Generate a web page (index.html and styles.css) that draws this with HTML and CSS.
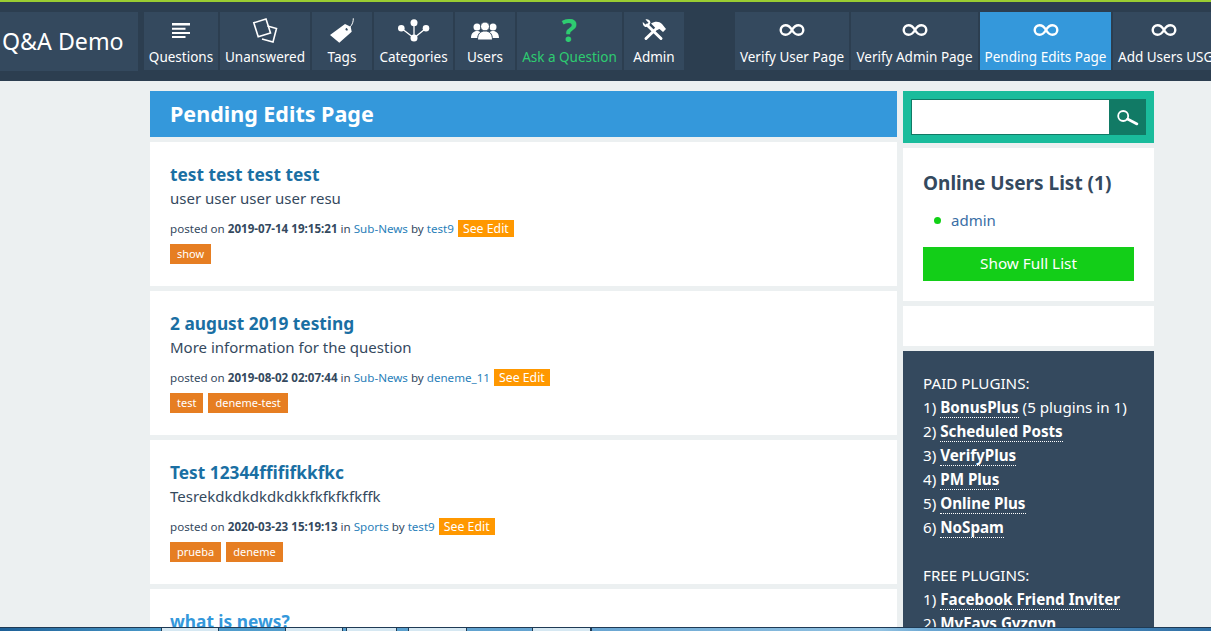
FILE: index.html
```html
<!DOCTYPE html>
<html lang="en">

<head>
    <meta name="viewport" content="width=device-width, initial-scale=1.0">
    <link rel="stylesheet" href="styles.css">
    <title>Pending Edits Page - Q&amp;A Demo</title>
</head>

<body>
    <header class="topbar">
        <a class="logo" href="#">Q&amp;A Demo</a>
        <nav class="nav nav-main">
            <a class="nav-item w-questions" href="#">
                <svg class="icon" viewBox="0 0 24 24"><path d="M3 5h18v2.500H3zM3 9.700h13.500v2H3zM3 14h18v2H3zM3 18h13.500v2H3z" fill="#fff"/></svg>
                Questions
            </a>
            <a class="nav-item w-unanswered" href="#">
                <svg class="icon" viewBox="0 0 24 24"><g fill="none" stroke="#fff" stroke-width="1.600"><path d="M14.500 8l9 2.500L20 24 9 21"/><path d="M.8 4.800L13 1l4.500 14L5.200 18.800z"/></g></svg>
                Unanswered
            </a>
            <a class="nav-item w-tags" href="#">
                <svg class="icon" viewBox="0 0 24 24"><path d="M0 17L15 6l5.700 2.700 1 5L9.300 24.700zM16.700 10a1.300 1.300 0 1 0 .1 0z" fill="#fff" fill-rule="evenodd"/><path d="M17 11c3-1 6.500-5 6.300-10.700" fill="none" stroke="#fff"/></svg>
                Tags
            </a>
            <a class="nav-item w-categories" href="#">
                <svg class="icon icon-wide" viewBox="0 0 32 24"><g fill="#fff"><path d="M16 5v15M16 20L3.300 10.300M16 20l12-9.700" fill="none" stroke="#fff" stroke-width="1.300"/><circle cx="16" cy="4.700" r="3.500"/><circle cx="3.300" cy="10.300" r="3.300"/><circle cx="28" cy="10.300" r="3.300"/><circle cx="16" cy="20" r="3.500"/></g></svg>
                Categories
            </a>
            <a class="nav-item w-users" href="#">
                <svg class="icon icon-wide" viewBox="0 0 32 24"><g fill="#fff"><circle cx="8" cy="9" r="3.500"/><circle cx="24" cy="9" r="3.500"/><path d="M2 20c0-5 3-7 6-7s6 2 6 7zM18 20c0-5 3-7 6-7s6 2 6 7z"/><circle cx="16" cy="8.500" r="4.500" stroke="#34495e"/><path d="M8.500 22c0-7 3.500-9 7.500-9s7.500 2 7.500 9z" stroke="#34495e"/></g></svg>
                Users
            </a>
            <a class="nav-item nav-ask w-ask" href="#">
                <span class="ask-mark">?</span>
                Ask a Question
            </a>
            <a class="nav-item w-admin" href="#">
                <svg class="icon" viewBox="0 0 24 24"><g fill="#fff"><path d="M5 7l14 13.500" fill="none" stroke="#fff" stroke-width="3" stroke-linecap="round"/><path d="M15 10L4 20.500" fill="none" stroke="#fff" stroke-width="3" stroke-linecap="round"/><path d="M.8 4l3.200 3 2.500-2.200L3.500 1.500C5.500.8 8 2 8.500 4.500L7 8 4 9C2 9 .5 6.500.8 4z"/><path d="M9 5.500C13 3 17 3 20 6l4 5-3 3-3.500-3-2.500 1-2.500-3z"/></g></svg>
                Admin
            </a>
        </nav>
        <nav class="nav nav-pages">
            <a class="nav-item w-verify-user" href="#">
                <svg class="icon-inf" viewBox="0 0 26 12"><use href="#inf"/></svg>
                Verify User Page
            </a>
            <a class="nav-item w-verify-admin" href="#">
                <svg class="icon-inf" viewBox="0 0 26 12"><use href="#inf"/></svg>
                Verify Admin Page
            </a>
            <a class="nav-item nav-active w-pending" href="#">
                <svg class="icon-inf" viewBox="0 0 26 12"><use href="#inf"/></svg>
                Pending Edits Page
            </a>
            <a class="nav-item w-add-users" href="#">
                <svg class="icon-inf" viewBox="0 0 26 12"><use href="#inf"/></svg>
                Add Users USG
            </a>
        </nav>
    </header>

    <svg class="defs" width="0" height="0"><defs><path id="inf" d="M13 6C11 2.500 9 1.200 6.500 1.200a4.800 4.800 0 0 0 0 9.600C9 10.800 11 9.500 13 6c2-3.500 4-4.800 6.500-4.800a4.800 4.800 0 0 1 0 9.600C17 10.800 15 9.500 13 6z" fill="none" stroke="#fff" stroke-width="2.400"/></defs></svg>

    <div class="wrap">
        <main class="main">
            <h1 class="page-title">Pending Edits Page</h1>

            <div class="question">
                <h2><a href="#">test test test test</a></h2>
                <p class="excerpt">user user user user resu</p>
                <p class="meta">posted on <b>2019-07-14 19:15:21</b> in <a href="#">Sub-News</a> by <a href="#">test9</a> <a class="see-edit" href="#">See Edit</a></p>
                <div class="tags"><a class="tag" href="#">show</a></div>
            </div>

            <div class="question">
                <h2><a href="#">2 august 2019 testing</a></h2>
                <p class="excerpt">More information for the question</p>
                <p class="meta">posted on <b>2019-08-02 02:07:44</b> in <a href="#">Sub-News</a> by <a href="#">deneme_11</a> <a class="see-edit" href="#">See Edit</a></p>
                <div class="tags"><a class="tag" href="#">test</a><a class="tag" href="#">deneme-test</a></div>
            </div>

            <div class="question">
                <h2><a href="#">Test 12344ffififkkfkc</a></h2>
                <p class="excerpt">Tesrekdkdkdkdkdkkfkfkfkfkffk</p>
                <p class="meta">posted on <b>2020-03-23 15:19:13</b> in <a href="#">Sports</a> by <a href="#">test9</a> <a class="see-edit" href="#">See Edit</a></p>
                <div class="tags"><a class="tag" href="#">prueba</a><a class="tag" href="#">deneme</a></div>
            </div>

            <div class="question">
                <h2><a class="title-new" href="#">what is news?</a></h2>
            </div>
        </main>

        <aside class="side">
            <form class="search">
                <input type="text" class="search-field">
                <button type="button" class="search-btn" aria-label="Search">
                    <svg viewBox="0 0 22 20" width="22" height="20"><circle cx="6.200" cy="9" r="5" fill="none" stroke="#fff" stroke-width="1.800"/><path d="M10.500 12l9.500 5" stroke="#fff" stroke-width="2.600" stroke-linecap="round"/></svg>
                </button>
            </form>

            <div class="box online">
                <h2>Online Users List (1)</h2>
                <ul>
                    <li><a href="#">admin</a></li>
                </ul>
                <a class="show-all" href="#">Show Full List</a>
            </div>

            <div class="box blank"></div>

            <div class="box plugins">
                <p>PAID PLUGINS:</p>
                <p>1) <a href="#">BonusPlus</a> (5 plugins in 1)</p>
                <p>2) <a href="#">Scheduled Posts</a></p>
                <p>3) <a href="#">VerifyPlus</a></p>
                <p>4) <a href="#">PM Plus</a></p>
                <p>5) <a href="#">Online Plus</a></p>
                <p>6) <a href="#">NoSpam</a></p>
                <p>&nbsp;</p>
                <p>FREE PLUGINS:</p>
                <p>1) <a href="#">Facebook Friend Inviter</a></p>
                <p>2) <a href="#">MyFavs Gyzgyn</a></p>
            </div>
        </aside>
    </div>

    <div class="taskbar">
        <span class="tb tb-1"></span><span class="tb tb-2"></span><span class="tb tb-3"></span><span class="tb tb-4"></span><span class="tb tb-5"></span><span class="tb tb-6"></span>
    </div>
</body>

</html>
```
FILE: styles.css
```css
* {
    box-sizing: border-box;
}

html,
body {
    height: 100%;
}

body {
    margin: 0;
    padding: 0;
    overflow: hidden;
    position: relative;
    font-family: "Noto Sans", sans-serif;
    font-size: 14px;
    color: #34495e;
    background-color: #ecf0f1;
}

a {
    color: #2980b9;
    text-decoration: none;
}

p {
    margin: 0;
}

.defs {
    display: block;
    height: 0;
}

/* top bar */
.topbar {
    display: flex;
    height: 81px;
    padding-top: 10px;
    background-color: #2c3e50;
    border-top: 2px solid #9acd32;
    overflow: hidden;
    white-space: nowrap;
}

.logo {
    flex: none;
    width: 138px;
    height: 59px;
    line-height: 58px;
    padding-left: 2px;
    font-size: 23.200px;
    color: #fff;
    background-color: #34495e;
}

.nav {
    display: flex;
    flex: none;
    gap: 2px;
    height: 58px;
}

.nav-main {
    margin-left: 6px;
}

.nav-pages {
    margin-left: 51px;
}

.nav-item {
    display: flex;
    flex: none;
    flex-direction: column;
    align-items: center;
    height: 58px;
    padding-top: 6px;
    font-size: 13.500px;
    line-height: 20px;
    color: #fff;
    background-color: #34495e;
}

.nav-ask {
    color: #2ecc71;
}

.nav-active {
    background-color: #3498db;
}

.icon {
    display: block;
    width: 24px;
    height: 24px;
    margin-bottom: 5px;
    overflow: visible;
}

.icon-wide {
    width: 32px;
}

.icon-inf {
    display: block;
    width: 26px;
    height: 12px;
    margin: 6px 0 11px;
}

.ask-mark {
    height: 24px;
    margin-bottom: 5px;
    font-size: 32px;
    line-height: 24px;
    font-weight: 700;
}

.w-questions { width: 74px; }
.w-unanswered { width: 90px; }
.w-tags { width: 60px; }
.w-categories { width: 79px; }
.w-users { width: 60px; }
.w-ask { width: 105px; }
.w-admin { width: 60px; }
.w-verify-user { width: 114px; }
.w-verify-admin { width: 127px; }
.w-pending { width: 131px; }
.w-add-users { width: 110px; align-items: flex-start; padding-left: 5px; }
.w-add-users .icon-inf { margin-left: 33px; }

/* page */
.wrap {
    display: flex;
    gap: 6px;
    padding: 10px 0 0 150px;
}

.main {
    flex: none;
    width: 747px;
}

.page-title {
    margin: 0 0 5px;
    height: 46px;
    padding-left: 20px;
    font-size: 21.500px;
    line-height: 46px;
    color: #fff;
    background-color: #3498db;
}

.question {
    height: 144px;
    margin-bottom: 5px;
    padding: 22px 20px 0;
    background-color: #fff;
}

.question h2 {
    margin: 0;
    font-size: 17.300px;
    line-height: 22px;
}

.question h2 a {
    color: #1a6fa3;
}

.question h2 .title-new {
    color: #3498db;
}

.excerpt {
    font-size: 15px;
    line-height: 24px;
}

.meta {
    margin-top: 9px;
    font-size: 11.600px;
    line-height: 19px;
}

.see-edit {
    display: inline-block;
    margin-left: 1px;
    padding: 0 5px;
    font-size: 12.300px;
    line-height: 17px;
    color: #fff;
    background-color: #ff9800;
}

.tags {
    display: flex;
    gap: 5px;
    margin-top: 6px;
}

.tag {
    padding: 0 7px;
    font-size: 11px;
    line-height: 20px;
    color: #fff;
    background-color: #e67e22;
}

/* sidebar */
.side {
    flex: none;
    width: 251px;
}

.search {
    display: flex;
    height: 52px;
    margin-bottom: 5px;
    padding: 8px;
    background-color: #1abc9c;
}

.search-field {
    flex: 1;
    min-width: 0;
    height: 36px;
    border: 1px solid #117a65;
    border-right: 0;
    background-color: #fff;
}

.search-btn {
    display: flex;
    align-items: center;
    justify-content: center;
    width: 37px;
    height: 36px;
    padding: 0;
    border: 0;
    background-color: #117a65;
}

.box {
    margin-bottom: 5px;
    background-color: #fff;
}

.online {
    height: 153px;
    padding: 22px 20px 0;
}

.online h2 {
    margin: 0;
    font-size: 19px;
    line-height: 26px;
}

.online ul {
    margin: 12px 0 0;
    padding: 0 0 0 28px;
    font-size: 15px;
    line-height: 24px;
}

.online li {
    position: relative;
    list-style: none;
}

.online li a {
    color: #3a6ea5;
}

.online li::before {
    content: "";
    position: absolute;
    left: -17px;
    top: 9px;
    width: 7px;
    height: 7px;
    border-radius: 50%;
    background-color: #11d116;
}

.show-all {
    display: block;
    height: 34px;
    margin-top: 15px;
    font-size: 15.300px;
    line-height: 33px;
    text-align: center;
    color: #fff;
    background-color: #13ce18;
}

.blank {
    height: 40px;
}

.plugins {
    padding: 20px 20px 0;
    height: 300px;
    font-size: 15.200px;
    line-height: 24px;
    color: #fff;
    background-color: #34495e;
}

.plugins a {
    font-weight: 700;
    color: #fff;
    border-bottom: 1px dotted #fff;
}

/* desktop taskbar peeking in at the bottom of the capture */
.taskbar {
    position: absolute;
    left: 0;
    right: 0;
    bottom: 0;
    display: flex;
    height: 4px;
    border-top: 1px solid #1f3a54;
    background: linear-gradient(90deg, #1d5f96 0, #4b9bcb 160px, #6aa6d2 600px, #93c3e2 880px, #6aa6d2 930px, #2f6fa5 1211px);
}

.tb {
    display: block;
    flex: none;
    height: 3px;
    border-left: 1px solid #1f3a54;
    border-right: 1px solid #1f3a54;
    background-color: #d6e8f2;
}

.tb-1 { margin-left: 161px; width: 58px; }
.tb-2 { margin-left: 66px; width: 58px; }
.tb-3 { margin-left: 3px; width: 51px; }
.tb-4 { margin-left: 11px; width: 59px; }
.tb-5 { margin-left: 65px; width: 59px; }
.tb-6 { width: 0; border-right: 0; }
```
